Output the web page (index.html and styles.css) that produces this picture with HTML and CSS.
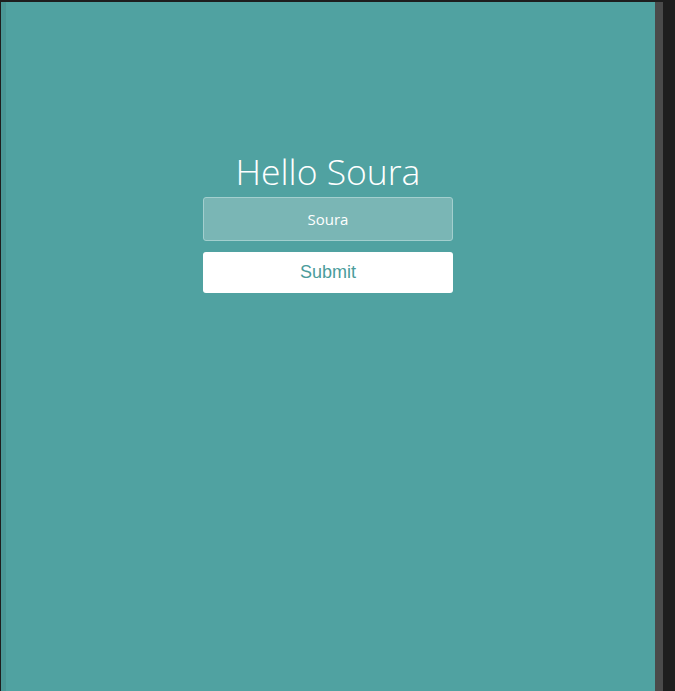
FILE: index.html
```html
<!DOCTYPE html>
<html>
<head>
<meta charset="utf-8">
<link rel="stylesheet" href="styles.css">
</head>
<body>
<div class="frame">
  <div class="app">
    <div class="content">
      <h1 class="title">Hello Soura</h1>
      <input class="name-input" type="text" value="Soura">
      <button class="submit">Submit</button>
    </div>
  </div>
  <div class="gutter"></div>
</div>
</body>
</html>
```
FILE: styles.css
```css
html, body {
  margin: 0;
  padding: 0;
  height: 100%;
  background: #1e1e1e;
}
.frame {
  display: flex;
  height: 689px;
  margin-top: 2px;
  padding-left: 1px;
}
.app {
  width: 649px;
  background: #50a2a1;
  border-left: 5px solid #4a9796;
  display: flex;
  justify-content: center;
}
.content {
  width: 250px;
  margin-left: -5px;
  padding-top: 146px;
  display: flex;
  flex-direction: column;
  align-items: center;
}
.gutter {
  width: 8px;
  background: #4a4a4a;
}
.title {
  margin: 0;
  font-family: "Open Sans", "Noto Sans", sans-serif;
  font-weight: 300;
  font-size: 35.5px;
  line-height: 47px;
  color: #ffffff;
  white-space: nowrap;
}
.name-input {
  box-sizing: border-box;
  width: 250px;
  height: 44px;
  margin-top: 2px;
  border: 1px solid #a3cfce;
  border-radius: 3px;
  background: #7ab6b5;
  color: #ffffff;
  text-align: center;
  font-family: "Open Sans", "Noto Sans", sans-serif;
  font-size: 15px;
  outline: none;
  padding: 0;
}
.submit {
  box-sizing: border-box;
  width: 250px;
  height: 41px;
  margin-top: 11px;
  border: none;
  border-radius: 3px;
  background: #ffffff;
  color: #4a9c9b;
  font-family: "Liberation Sans", Arial, sans-serif;
  font-size: 18px;
  padding: 0;
}
```
